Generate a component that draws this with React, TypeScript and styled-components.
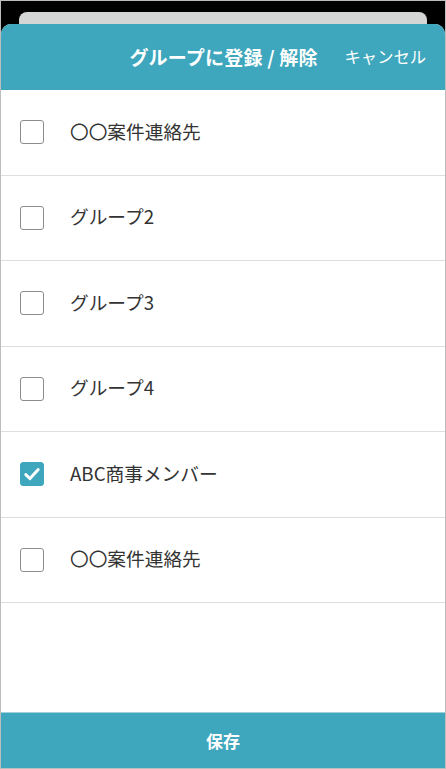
import styled, { createGlobalStyle } from "styled-components";

const GlobalStyle = createGlobalStyle`
  html, body {
    margin: 0;
    padding: 0;
    background: #ffffff;
  }
  * {
    box-sizing: border-box;
  }
  body {
    font-family: "Noto Sans CJK JP", "Noto Sans", sans-serif;
  }
`;

const TEAL = "#3ea6bd";

const Frame = styled.div`
  width: 446px;
  height: 769px;
  border: 1px solid #bdbdbd;
  background: #000000;
  display: flex;
  flex-direction: column;
  padding-top: 11px;
  overflow: hidden;
`;

const BackSheet = styled.div`
  height: 12px;
  margin: 0 18px 0 18px;
  background: #d4d6d6;
  border-radius: 8px 8px 0 0;
`;

const Sheet = styled.div`
  flex: 1;
  display: flex;
  flex-direction: column;
  background: #ffffff;
  border-radius: 10px 10px 0 0;
  overflow: hidden;
`;

const Header = styled.header`
  height: 66px;
  background: ${TEAL};
  display: grid;
  grid-template-columns: 1fr auto 1fr;
  align-items: center;
  padding: 0 19px 0 20px;
  color: #ffffff;
`;

const Title = styled.h1`
  grid-column: 2;
  margin: 0 0 2px;
  font-size: 19px;
  font-weight: 700;
  letter-spacing: 0.2px;
  white-space: nowrap;
`;

const CancelButton = styled.button`
  grid-column: 3;
  justify-self: end;
  background: none;
  border: none;
  padding: 0 0 2px;
  color: #ffffff;
  font-family: inherit;
  font-size: 16.3px;
  font-weight: 400;
  cursor: pointer;
`;

const List = styled.ul`
  flex: 1;
  list-style: none;
  margin: 0;
  padding: 0;
`;

const Row = styled.li`
  height: 85.5px;
  display: flex;
  align-items: center;
  gap: 26px;
  padding: 0 0 0 19px;
  border-bottom: 1px solid #dedede;
`;

const Box = styled.span<{ $checked: boolean }>`
  width: 24px;
  height: 24px;
  border-radius: 3px;
  flex-shrink: 0;
  display: flex;
  align-items: center;
  justify-content: center;
  border: 1px solid ${(p) => (p.$checked ? TEAL : "#8c8c8c")};
  background: ${(p) => (p.$checked ? TEAL : "#ffffff")};
`;

const Label = styled.span`
  margin-bottom: 4px;
  font-size: 18.7px;
  color: #333333;
  font-weight: 400;
`;

const SaveBar = styled.button`
  height: 56px;
  border: none;
  border-top: 1px solid #9fd0dc;
  background: ${TEAL};
  color: #ffffff;
  font-family: inherit;
  font-size: 17px;
  font-weight: 700;
  cursor: pointer;
`;

const groups = [
  { name: "〇〇案件連絡先", checked: false },
  { name: "グループ2", checked: false },
  { name: "グループ3", checked: false },
  { name: "グループ4", checked: false },
  { name: "ABC商事メンバー", checked: true },
  { name: "〇〇案件連絡先", checked: false },
];

function Check() {
  return (
    <svg width="20" height="20" viewBox="0 0 20 20">
      <path
        d="M3.8 10.6 L8 14.6 L16.2 5.6"
        fill="none"
        stroke="#ffffff"
        strokeWidth="3"
        strokeLinecap="round"
        strokeLinejoin="round"
      />
    </svg>
  );
}

export default function App() {
  return (
    <>
      <GlobalStyle />
      <Frame>
        <BackSheet />
        <Sheet>
          <Header>
            <Title>グループに登録 / 解除</Title>
            <CancelButton>キャンセル</CancelButton>
          </Header>
          <List>
            {groups.map((g, i) => (
              <Row key={i}>
                <Box $checked={g.checked}>{g.checked && <Check />}</Box>
                <Label>{g.name}</Label>
              </Row>
            ))}
          </List>
          <SaveBar>保存</SaveBar>
        </Sheet>
      </Frame>
    </>
  );
}
